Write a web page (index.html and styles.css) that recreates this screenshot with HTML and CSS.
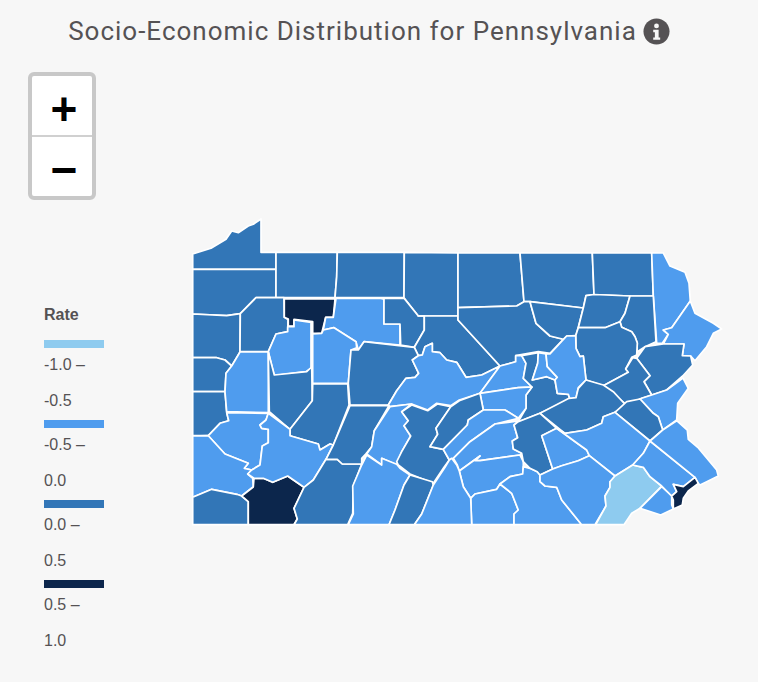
FILE: index.html
```html
<!DOCTYPE html>
<html lang="en">
<head>
  <meta charset="UTF-8" />
  <title>Socio-Economic Distribution for Pennsylvania</title>
  <link rel="stylesheet" href="styles.css">
</head>
<body>
  <div class="title-row">
    <h1>Socio-Economic Distribution for Pennsylvania</h1>
    <svg class="info-icon" viewBox="0 0 28 28" aria-hidden="true">
      <circle cx="14" cy="14" r="13.5" fill="#555254"/>
      <circle cx="14" cy="8.2" r="2.5" fill="#f7f7f7"/>
      <path d="M10.6 12.2h5.6v7.9h1.6v2.5h-7.2v-2.5h1.7v-5.4h-1.7z" fill="#f7f7f7"/>
    </svg>
  </div>

  <div class="content">
    <div class="side">
      <div class="zoom-control">
        <button class="zoom-btn">+</button>
        <button class="zoom-btn">−</button>
      </div>

      <div class="legend">
        <p class="legend-title">Rate</p>
        <div class="legend-item"><span class="swatch q1"></span><p>-1.0 – -0.5</p></div>
        <div class="legend-item"><span class="swatch q2"></span><p>-0.5 – 0.0</p></div>
        <div class="legend-item"><span class="swatch q3"></span><p>0.0 – 0.5</p></div>
        <div class="legend-item"><span class="swatch q4"></span><p>0.5 – 1.0</p></div>
      </div>
    </div>

    <svg class="map" viewBox="191 218 540 310" width="540" height="310">
      <!-- north tier -->
      <polygon class="q3" points="192.7,254 211,248.3 226,239.3 231.7,231 238.3,232.7 248.3,226 253.3,224.3 261,219 261,252.3 276,252.3 276,269.3 192.7,269.3"/>
      <polygon class="q3" points="192.7,269.3 276,269.3 276,297.7 256,297.7 240.3,313.7 226.7,315.7 192.7,314"/>
      <polygon class="q3" points="276,252.3 337.3,252.3 336.7,276.7 335,297.7 276,297.7"/>
      <polygon class="q3" points="337.3,252.3 404.3,252.3 404,297.7 335,297.7 336.7,276.7"/>
      <polygon class="q3" points="404.3,252.3 458,253 458,316 418.3,316 404,297.7"/>
      <polygon class="q3" points="458,253 520,253 524,301.7 516.7,306 458,307.7"/>
      <polygon class="q3" points="520,253 592.3,253 594,294.5 586,295.7 583.3,308 530,301.7 524,301.7"/>
      <polygon class="q3" points="592.3,253 651.7,253 653.3,296 630,296 594,294.5"/>
      <polygon class="q2" points="651.7,253 663.3,253 670,266 685,272.3 689,283.3 690.3,301 671.7,327.7 663.3,330 668.3,334.3 662.3,343.3 656.7,343.3 653.3,296"/>
      <polygon class="q2" points="690.3,301 695,313.3 713.3,323.3 721.7,329 713.3,333.3 706.7,346.7 695,360.7 690.7,356 682.3,355.7 684,344 663.3,344 668.3,334.3 663.3,330 671.7,327.7"/>

      <!-- second tier -->
      <polygon class="q3" points="192.7,314 226.7,315.7 240.3,313.7 240,352 231.7,366 225,360 216.7,357.7 192.7,357.7"/>
      <polygon class="q3" points="256,297.7 284,297.7 284.3,317.3 288,319.5 287.7,331.7 276,334 268.3,351.7 240,351.7 240.3,313.7"/>
      <polygon class="q4" points="284.3,299 335,299 333.3,317.3 325.7,317.3 321.7,333.3 312.7,333.3 312.7,321.7 294,319.3 294,326 288.3,326 288.3,319 284.3,317.3"/>
      <polygon class="q2" points="336,298.3 380,298.3 384,299.3 384,324 400,324 400,345 364,341.7 358.3,350 356,341.7 334,327.7 323.3,330 325.7,317.3 333.3,317.3"/>
      <polygon class="q3" points="384,298.3 404,298.3 418.3,316 424.3,316 424.3,330 414.3,347.3 400.7,345 400,324 384,324"/>
      <polygon class="q3" points="418.3,316 458,316 458,320 500,366 481.7,375 466,377.3 456.7,362.3 446.7,360 440,352.7 432.3,351.7 432.3,343.3 425,346.7 422.3,355 418.3,355.7 414.3,347.3 424.3,330 424.3,316"/>
      <polygon class="q3" points="458,307.7 516.7,306 524,301.7 530,301.7 536,323.3 550,336 563.3,339.3 550,353.3 538.3,351.7 522.7,354.3 515.7,355.7 515.7,361.7 500,366 458,320"/>
      <polygon class="q3" points="530,301.7 583.3,308 578.3,327.3 575.7,335.7 566.7,336 563.3,339.3 550,336 536,323.3"/>
      <polygon class="q3" points="586,295.7 594,294.5 630,296 625,313.3 620,321.7 605,327.7 578.3,327.7 583.3,308"/>
      <polygon class="q3" points="630,296 653.3,296 656,341.7 645,346.7 637,352 637.3,343 635,336.7 631.7,331.7 621.7,327.3 620,321.7 625,313.3"/>
      <polygon class="q3" points="578.3,327.7 605,327.7 620,321.7 621.7,327.3 631.7,331.7 635,336.7 637.3,343 636.7,355 631.7,357.3 625.7,369 628.3,372.3 603.3,385.7 586,380 583.3,356 580,356.7 576,348.3 575.7,335.7"/>
      <polygon class="q3" points="663.3,344 684,344 682.3,355.7 690.7,356 692.7,365 682.7,376 666.7,390 651.7,395 644,381.7 650,375.7 636.7,358.3 645,346.7"/>
      <polygon class="q3" points="632.7,357.7 636.7,358.3 650,375.7 644,381.7 651.7,395 641.7,398.3 626.7,405 613.3,394 603.3,385.7 628.3,372.3 625.7,369"/>

      <!-- third tier -->
      <polygon class="q2" points="287.7,326.7 294,326.7 294,320 311,322.3 311,368.3 306,371.7 274.3,375.7 268.3,351.7 276,334 287.7,331.7"/>
      <polygon class="q2" points="312.7,334 321.7,333.3 323.3,330 334,327.7 356,341.7 356.7,347.7 351,350 348.3,383.3 312.7,383.3"/>
      <polygon class="q3" points="351,350 358.3,350 364,341.7 414.3,347.3 418.3,355.7 412.3,360 418.7,373.3 415,377.3 406,378.3 396.7,390.7 388.3,405 350,405 348.3,383.3"/>
      <polygon class="q2" points="388.3,405 396.7,390.7 406,378.3 415,377.3 418.7,373.3 412.3,360 418.3,355.7 422.3,355 425,346.7 432.3,343.3 432.3,351.7 440,352.7 446.7,360 456.7,362.3 466,377.3 481.7,375 500,366 480,393.3 459.3,400 450.7,405.7 436.7,403.3 427.7,410 411.7,404 390,406.7"/>
      <polygon class="q2" points="500,366 515.7,361.7 515.7,355.7 521.7,355.7 526,363.3 523.3,378.3 532,387 518.3,387.7 480,393.3"/>
      <polygon class="q3" points="521.7,355.7 538.3,352.7 537.7,363.3 532.3,380 546.7,376.7 555,380 557.3,393.3 568.3,394.3 570,399.3 540,413.3 518.3,421.7 526,408.3 526,395 532,387 523.3,378.3 526,363.3"/>
      <polygon class="q2" points="538.3,352.7 546,354 547.3,366.7 557.3,377.3 555,380 546.7,376.7 532.3,380 537.7,363.3"/>
      <polygon class="q2" points="550,354 566.7,336 575.7,335.7 576,348.3 580,356.7 583.3,356 586,380 578.3,387.7 576,398.3 570,399.3 568.3,394.3 557.3,393.3 555,380 557.3,377.3 547.3,366.7 546,354"/>
      <polygon class="q2" points="480,393.3 518.3,387.7 532,387 526,395 526,408.3 518.3,418.3 505,410 483.3,410"/>
      <polygon class="q3" points="586,380 603.3,385 613.3,391.7 625.7,405 615,412.3 603.3,416.7 601.7,423.3 586.7,430 565,433.3 540,413.3 569,398.3 576,397.7 578.3,388.3"/>
      <polygon class="q2" points="641.7,398.3 651.7,395 666.7,390 683,378 688.3,388.3 677.7,403.3 676.7,420 662.7,430 658.3,416.7 653.3,413.3 640,399"/>
      <polygon class="q3" points="640,399 653.3,413.3 658.3,416.7 662.7,430 650,441 615,412.3 626.7,401.7"/>

      <!-- west -->
      <polygon class="q3" points="192.7,357.7 216.7,357.7 225,360 231.7,366 226,373.3 225,391.7 192.7,391.7"/>
      <polygon class="q3" points="192.7,391.7 225,391.7 226.7,412.3 228.7,420.7 220,423.3 208.3,435.7 192.7,435.7"/>
      <polygon class="q2" points="226,373.3 231.7,366 240,352 268.3,352 268.3,412.7 226.7,411.7 225,391.7"/>
      <polygon class="q3" points="268.3,352 274.3,375 306.7,371.7 311.7,367 312.3,400.7 290,429.3 269.3,411.7"/>
      <polygon class="q3" points="312.7,384 347.7,384 349,405 333.3,445 330,444 320,450 318.3,444 290,435.7 290,429.3 312.3,400.7"/>
      <polygon class="q2" points="226.7,412.7 268.3,413.3 266,420 260,425 261.7,428.3 268.3,429.3 268.3,442.7 262.3,446 260,465 251.7,470 244.3,468.3 248.3,463.3 225,454 208.3,435.7 220,423.3 228.7,420.7"/>
      <polygon class="q2" points="192.7,436 208.3,435.7 225,454 248.3,463.3 244.3,468.3 251.7,470 247.7,474 252.7,478.3 253.3,486.7 241.7,496 236.7,494.3 211.7,489.3 192.7,497.3"/>
      <polygon class="q3" points="192.7,497.3 211.7,489.3 236.7,494.3 241.7,496 248.3,501.7 248.3,524.7 192.7,524.7"/>
      <polygon class="q4" points="241.7,496 253.3,487 254,478.3 263.3,478.3 272.7,482.3 287.7,476 304,487.3 294,508.3 297.3,519 294,524.7 248.3,524.7 248.3,501.7"/>
      <polygon class="q2" points="268.3,413.3 290,429.3 290,435.7 318.3,444 320,450 330,444 333.3,445 326,459.3 313.3,480 304,487.3 287.7,476 272.7,482.3 263.3,478.3 254,478.3 247.7,474 251.7,470 260,465 262.3,446 268.3,442.7 268.3,429.3 261.7,428.3 260,425 266,420"/>
      <polygon class="q3" points="326,459.3 337.3,459.3 342.3,464 361.7,464 353.3,486 352.7,513.3 347.7,524.7 294,524.7 297.3,519 294,508.3 304,487.3 313.3,480"/>

      <!-- ridge and valley -->
      <polygon class="q3" points="350,405.7 389,405.7 374.3,430.7 371.7,446.7 365.7,454 361.7,458.3 361.7,464 342.3,464 337.3,459.3 326,459.3 333.3,445"/>
      <polygon class="q2" points="390,406.7 411.7,404 401.7,411.7 408.3,420.7 404,425.7 410.7,436 401.7,451.7 396.7,465 381.7,458.3 381.7,465 366.7,454 371.7,446.7 374.3,430.7"/>
      <polygon class="q3" points="411.7,405 427.7,410.7 437.3,404 450.7,406.7 436,428.3 437.7,434.3 430,446.7 443.3,449.3 449.3,460 444,467.3 433.3,483.3 410,474 398.3,465 396.7,461.7 401.7,451.7 410.7,436 404,425.7 408.3,420.7 401.7,411.7"/>
      <polygon class="q3" points="450.7,406.7 459.3,400.7 480,393.3 483.3,410 468.3,420 467.3,425 443.3,449.3 430,446.7 437.7,434.3 436,428.3"/>
      <polygon class="q2" points="483.3,410 505,410 518.3,418.3 495,424 470,441.7 453.3,458.3 449.3,460 443.3,449.3 467.3,425 468.3,420"/>
      <polygon class="q2" points="453.3,458.3 470,441.7 495,424 518.3,421 514,425 517.7,437.7 512.3,441 513.3,449 521.7,453.3 520,455 480,460.7 475,460.7 480,456 459.3,471 457.3,465"/>
      <polygon class="q2" points="459.3,471 480,456 475,460.7 480,460.7 520,455 523.3,461.7 523.3,466.7 522.7,474 510,476.7 500,484 496.7,489.3 475,494 470.7,498.3 463.3,486.7"/>
      <polygon class="q2" points="470.7,498.3 475,494 496.7,489.3 500,484 511.7,493.3 518.3,510 514,514 514,524.7 471.7,524.7"/>
      <polygon class="q2" points="500,484 510,476.7 522.7,474 523.3,466.7 530,468.3 537.3,471.7 540,475 540,481.7 545,486 556.7,487.3 561.7,500 581.7,524.7 514,524.7 514,514 518.3,510 511.7,493.3"/>
      <polygon class="q2" points="366.7,455 381.7,465 381.7,458.3 396.7,464.3 400,468.3 410,475 404,485 395,510 389,524.7 348.3,524.7 353.3,514 352.7,486 361.7,465"/>
      <polygon class="q3" points="410,475 432.3,481.7 433.3,485 421.7,514 414.3,524.7 389,524.7 395,510 404,485"/>
      <polygon class="q2" points="433.3,485 445,467.3 449.3,460 451.7,458.3 456.7,465 459.3,471 463.3,486.7 470.7,498.3 471.7,524.7 414.3,524.7 421.7,514"/>

      <!-- southeast -->
      <polygon class="q3" points="518.3,421.7 540,413.3 556.7,428.3 541.7,435.7 552.7,469 540,475 537.3,471.7 530,468.3 523.3,461.7 521.7,453.3 513.3,449 512.3,441 517.7,437.7 514,425"/>
      <polygon class="q2" points="541.7,435.7 556.7,428.3 578.3,444 586.7,450 589.3,455.7 578.3,460.7 561.7,465.7 552.7,469"/>
      <polygon class="q2" points="565,433.3 586.7,430 601.7,423.3 603.3,416.7 615,412.3 650,441 643.3,453.3 632.7,465 615,476 589.3,455.7 586.7,450 578.3,444 556.7,428.3"/>
      <polygon class="q2" points="552.7,469 561.7,465.7 578.3,460.7 589.3,455.7 615,476 610,481.7 610,487.3 605,496 606,506 595,524.7 581.7,524.7 561.7,500 556.7,487.3 545,486 540,481.7 540,475"/>
      <polygon class="q1" points="632.7,465 643.3,467.3 650,476.7 661.7,486 640,508.3 631.7,513.3 624,524.7 595.7,524.7 606,506 605,496 610,487.3 610,481.7 615,476"/>
      <polygon class="q2" points="661.7,486.7 671.7,496 671.7,505 673.3,509 660.7,515 640,508.3"/>
      <polygon class="q2" points="650,441 695,477.3 683.3,486.7 673.3,484.3 676.7,491.7 671.7,496 661.7,486 650,476.7 643.3,467.3 632.7,465 643.3,453.3"/>
      <polygon class="q2" points="650,441 662.7,430 676.7,420.7 687.3,430 688.3,439.3 697.7,447.3 716.7,470 718.3,476 706.7,481.7 700,485 698.3,483.3 695,477.3"/>
      <polygon class="q4" points="695,477.3 698.3,483.3 688.3,491 683.3,498.3 682.3,505 673.3,509 673.3,500 671.7,496 676.7,491.7 673.3,484.3 683.3,486.7"/>
    </svg>
  </div>
</body>
</html>
```

FILE: styles.css
```css
* {
  box-sizing: border-box;
}

body {
  margin: 0;
  background: #f7f7f7;
  color: #555254;
  font-family: "Liberation Sans", Arial, sans-serif;
}

.title-row {
  display: flex;
  justify-content: center;
  align-items: center;
  gap: 6px;
  height: 62px;
  margin-bottom: 10px;
  padding-right: 20px;
}

h1 {
  margin: 0;
  font-family: Roboto, sans-serif;
  font-size: 26px;
  font-weight: 400;
  letter-spacing: 1px;
}

.info-icon {
  width: 27px;
  height: 27px;
}

.content {
  display: grid;
  grid-template-columns: 191px 540px;
}

.side {
  padding-left: 28px;
}

.zoom-control {
  display: flex;
  flex-direction: column;
  width: 68px;
  height: 128px;
  border: 4px solid #c8c8c8;
  border-radius: 6px;
  background: #fff;
}

.zoom-btn {
  flex: 1;
  padding: 6px 0 0 4px;
  border: none;
  background: none;
  color: #000;
  font-family: "Liberation Sans", Arial, sans-serif;
  font-size: 46px;
  font-weight: 700;
  line-height: 1;
}

.zoom-btn:first-child {
  border-bottom: 2px solid #d0d0d0;
}

.legend {
  width: 60px;
  margin: 105px 0 0 16px;
  font-size: 16px;
}

.legend-title {
  margin: 0 0 15px;
  font-weight: 700;
  line-height: 20px;
}

.legend-item {
  height: 80px;
}

.legend-item p {
  margin: -1px 0 0;
  line-height: 36px;
}

.swatch {
  display: block;
  height: 8px;
}

.map {
  display: block;
  margin-top: 146px;
}

.map polygon {
  stroke: #fff;
  stroke-width: 1.7;
  stroke-linejoin: round;
}

.q1 { background: #8ecbef; fill: #8ecbef; }
.q2 { background: #4f9cee; fill: #4f9cee; }
.q3 { background: #3276b7; fill: #3276b7; }
.q4 { background: #0c264c; fill: #0c264c; }
```
